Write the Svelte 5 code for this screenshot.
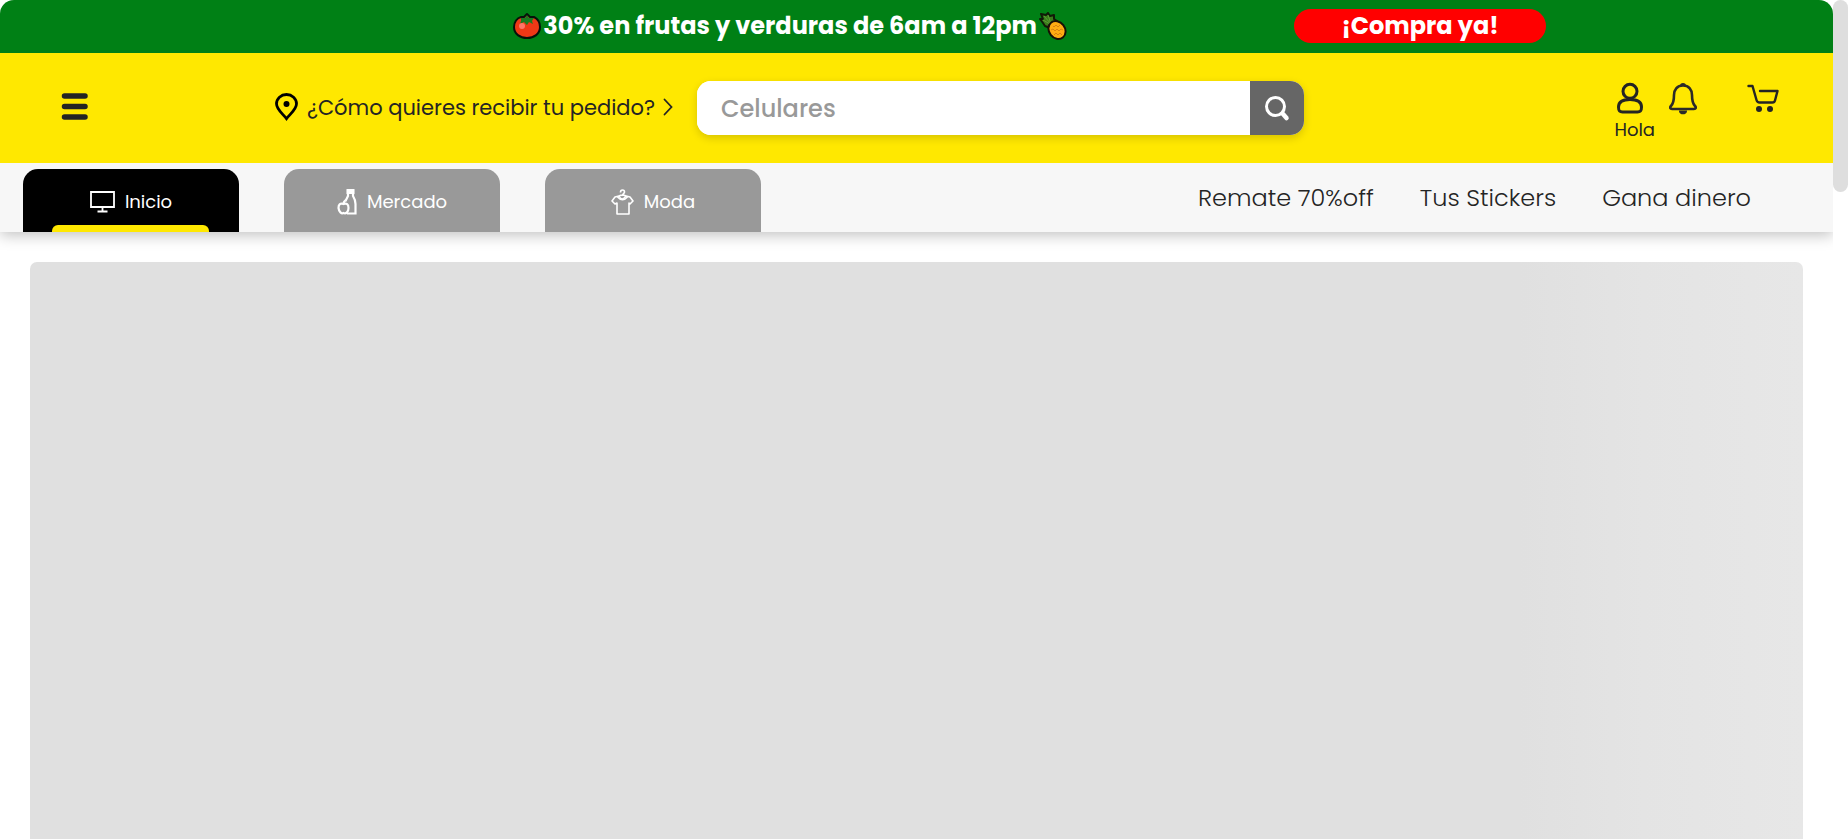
<script>
  let active = $state('Inicio');
  const tabs = ['Inicio', 'Mercado', 'Moda'];
  const links = ['Remate 70%off', 'Tus Stickers', 'Gana dinero'];
</script>

<div class="page">
  <div class="content">
    <header>
      <div class="promo">
        <p>
          <svg width="28" height="28" viewBox="0 0 28 28" aria-hidden="true">
            <path d="M8 5 11 5 14 2 17 5 21 5C25 7 27 11 27 15c0 7-6 11-13 11S1 22 1 15C1 10 4 6 8 5Z" fill="#ee3816" stroke="#07120a" stroke-width="2" stroke-linejoin="round" />
            <path d="m8 6 4 0 2-3 2 3 5 0-2 3 1 3-4-2-2 3-3-3-4 2 1-3Z" fill="#1a7a20" />
            <circle cx="9" cy="14" r="3" fill="#ff7668" />
          </svg>
          <span>30% en frutas y verduras de 6am a 12pm</span>
          <svg width="28" height="28" viewBox="0 0 28 28" aria-hidden="true">
            <path d="M1 7 4 7 2 2 7 3 9 1 11 4 15 3 15 7 18 9 16 12 11 16 6 14 4 11Z" fill="#397c1b" stroke="#101a07" stroke-width="2" stroke-linejoin="round" />
            <path d="m4 8 7 4M5 4l7 8M9 3l3 9" stroke="#5c9a35" stroke-width="1" />
            <ellipse cx="18" cy="18" rx="8" ry="9.500" transform="rotate(-38 18 18)" fill="#ffac13" stroke="#181006" stroke-width="2" />
            <path d="m14 14 1 1 2-2 2 2 2-2M12 18l2-1 2 2 2-2 2 2 2-2 2 1M15 23l2-2 2 2 2-2 2 2" fill="none" stroke="#d98310" stroke-width="1" />
          </svg>
        </p>
        <button class="buy">¡Compra ya!</button>
      </div>

      <div class="main-bar">
        <button class="menu" aria-label="Menú">
          <svg width="28" height="28" viewBox="0 0 28 28" fill="none" stroke="#242424" stroke-width="5.500" stroke-linecap="round">
            <path d="M3.500 3h20.500M3.500 13.500h20.500M3.500 24h20.500" />
          </svg>
        </button>
        <button class="delivery">
          <svg width="24" height="28" viewBox="0 0 24 28">
            <path d="M11.500 25.600C8 21 1.500 16.500 1.500 10.800 1.500 5.500 6 1.500 11.500 1.500s10 4 10 9.300C21.500 16.500 15 21 11.500 25.600Z" fill="none" stroke="#000" stroke-width="2.800" />
            <circle cx="11.500" cy="11" r="3" />
          </svg>
          <span>¿Cómo quieres recibir tu pedido?</span>
          <svg width="10" height="18" viewBox="0 0 10 18" fill="none" stroke="#242424" stroke-width="1.800" stroke-linecap="round">
            <path d="m1.500 1.500 7 7.500-7 7.500" />
          </svg>
        </button>
        <form class="search" onsubmit={(e) => e.preventDefault()}>
          <input type="search" placeholder="Celulares" aria-label="Buscar" />
          <button aria-label="Buscar">
            <svg width="28" height="28" viewBox="0 0 28 28" fill="none" stroke="#fff" stroke-linecap="round">
              <circle cx="12.500" cy="12.500" r="9" stroke-width="3" />
              <path d="m20 20 3.500 4" stroke-width="4.500" />
            </svg>
          </button>
        </form>
        <div class="actions">
          <button class="account">
            <svg width="28" height="32" viewBox="0 0 28 32" fill="none" stroke="#242424" stroke-width="3">
              <circle cx="14" cy="9.300" r="7" />
              <path d="M14 17.500c-6 0-11.500 1.500-11.500 7.500 0 4 1 5 4 5h15c3 0 4-1 4-5 0-6-5.500-7.500-11.500-7.500Z" />
            </svg>
            <span>Hola</span>
          </button>
          <button aria-label="Notificaciones">
            <svg width="28" height="33" viewBox="0 0 28 33">
              <path d="M14 3.500c-6 0-9 4.500-9 9.500 0 7-1 9-3 11-1.500 1.500-.8 3 1 3h22c1.800 0 2.500-1.500 1-3-2-2-3-4-3-11 0-5-3-9.500-9-9.500Z" fill="none" stroke="#2b2a29" stroke-width="2.600" />
              <path d="M11 4a3 3 0 0 1 6 0ZM10 28.500h8c.5 5-8.500 5-8 0Z" fill="#2b2a29" />
            </svg>
          </button>
          <button class="cart" aria-label="Carrito">
            <svg width="32" height="32" viewBox="0 0 32 32" fill="none" stroke="#242424" stroke-width="2.400" stroke-linecap="round" stroke-linejoin="round">
              <path d="M1.500 4h4l4 14q.7 2.500 3 2.500h13q2 0 2.500-2l2.500-9.500H13" />
              <circle cx="12" cy="27" r="3" fill="#242424" stroke="none" />
              <circle cx="23" cy="27" r="3" fill="#242424" stroke="none" />
            </svg>
          </button>
        </div>
      </div>

      <nav>
        <div class="tabs">
          {#each tabs as tab}
            <button class:active={active === tab} onclick={() => (active = tab)}>
              {#if tab === 'Inicio'}
                <svg width="25" height="26" viewBox="0 0 25 26" fill="none" stroke="#fff" stroke-width="1.800">
                  <path d="M1 3h23v15H1Z M12.500 18v4M7.500 22.500h10" />
                </svg>
              {:else if tab === 'Mercado'}
                <svg width="20" height="26" viewBox="0 0 20 26" fill="none" stroke="#fff" stroke-width="2.200">
                  <path d="M8.500 12 11 7V2h5v5q2.500 4 2.500 8v9.500H10" />
                  <path d="M9.500 0h8v5h-8Z" fill="#fff" stroke="none" />
                  <path d="M6.500 15c-3.500-1.500-5 1-5 4 .5 4 3 6 5 5 2.500 1 5-1 5-5s-2-5-5-4Zm0 0q0-3 3-4" />
                </svg>
              {:else}
                <svg width="23" height="26" viewBox="0 0 23 26" fill="none" stroke="#fff" stroke-width="1.600" stroke-linejoin="round">
                  <path d="M8 7 4 8l-3 4 3 3 2-1v11h12V14l1 1 3-3-3-4-4-1q-4 6-7 0Z" />
                  <path d="M9.500 3.500c0-3.500 4-3 4-.5 0 2-2.500 1.500-2 4M8 7q3.500-2 7 0M6.500 8q5 5.500 10 0" />
                </svg>
              {/if}
              <span>{tab}</span>
            </button>
          {/each}
        </div>
        <div class="links">
          {#each links as link}
            <a href="#inicio">{link}</a>
          {/each}
        </div>
      </nav>
    </header>
    <main>
      <div class="banner" aria-busy="true"></div>
    </main>
  </div>
  <div class="scroll-track" aria-hidden="true"><div class="thumb"></div></div>
</div>

<style>
  :global(body) { margin: 0; background: #fff; }
  .page {
    display: grid;
    grid-template-columns: minmax(0, 1fr) 15px;
    height: 100vh;
    overflow: hidden;
    color: #242424;
    font-family: Poppins, Inter, sans-serif;
  }
  .content { display: flex; flex-direction: column; min-width: 0; overflow: hidden; }
  button, input { font: inherit; color: inherit; border: 0; padding: 0; margin: 0; }
  button { background: none; cursor: pointer; }
  svg { display: block; flex: none; }
  header { box-shadow: 0 3px 14px rgb(0 0 0 / 25%); }
  .promo {
    display: flex;
    align-items: center;
    justify-content: space-between;
    box-sizing: border-box;
    height: 53px;
    padding: 0 287px 2px 28%;
    border-radius: 14px 14px 0 0;
    background: #008015;
    color: #fff;
    font-size: 24px;
    font-weight: 700;
    white-space: nowrap;
  }
  .promo p { display: flex; align-items: center; gap: 2px; margin: 0; }
  .buy { width: 252px; height: 34px; border-radius: 17px; background: #f00; line-height: 34px; }
  .main-bar {
    display: grid;
    grid-template-columns: 214px 422px minmax(0, 607px) 1fr;
    align-items: center;
    height: 110px;
    padding-left: 61px;
    background: #ffe800;
  }
  .menu { justify-self: start; padding-bottom: 2px; }
  .delivery { display: flex; align-items: center; gap: 8px; padding-bottom: 2px; font-size: 21px; white-space: nowrap; }
  .search {
    display: flex;
    height: 54px;
    border-radius: 14px;
    overflow: hidden;
    background: #fff;
    box-shadow: 0 3px 8px rgb(0 0 0 / 16%);
  }
  .search input { flex: 1; min-width: 0; padding: 0 24px; background: #fff; font-size: 24px; font-weight: 500; outline: 0; }
  .search input::placeholder { color: #999; opacity: 1; }
  .search button { display: grid; place-items: center; width: 54px; background: #666; }
  .actions { display: flex; align-items: flex-start; justify-content: flex-end; gap: 14px; padding: 8px 54px 0 0; }
  .account { display: flex; flex-direction: column; align-items: flex-start; gap: 4px; font-size: 18px; line-height: 24px; }
  .account svg { margin-left: 2px; }
  .cart { margin-left: 36px; }
  nav { display: flex; justify-content: space-between; height: 69px; background: #f7f7f7; }
  .tabs { display: flex; align-items: flex-end; gap: 45px; padding-left: 23px; }
  .tabs button {
    position: relative;
    display: flex;
    align-items: center;
    justify-content: center;
    gap: 10px;
    box-sizing: border-box;
    width: 216px;
    height: 63px;
    padding-top: 2px;
    border-radius: 15px 15px 0 0;
    background: #999;
    color: #fff;
    font-size: 18px;
  }
  .tabs .active { background: #000; }
  .tabs .active::after {
    content: '';
    position: absolute;
    left: 29px;
    right: 30px;
    bottom: 0;
    height: 7px;
    border-radius: 6px 6px 0 0;
    background: #ffe800;
  }
  .links { display: flex; align-items: center; gap: 46px; padding-right: 82px; font-size: 24px; font-weight: 300; white-space: nowrap; }
  .links a { color: inherit; text-decoration: none; }
  main { display: flex; flex: 1; padding: 30px 30px 0; }
  .banner {
    flex: 1;
    border-radius: 7px 7px 0 0;
    background: linear-gradient(90deg, #e0e0e0 84%, #e4e4e4 91%, #e7e7e7);
  }
  .scroll-track { background: #fff; }
  .thumb { height: 192px; border-radius: 8px; background: #dedede; }
</style>
